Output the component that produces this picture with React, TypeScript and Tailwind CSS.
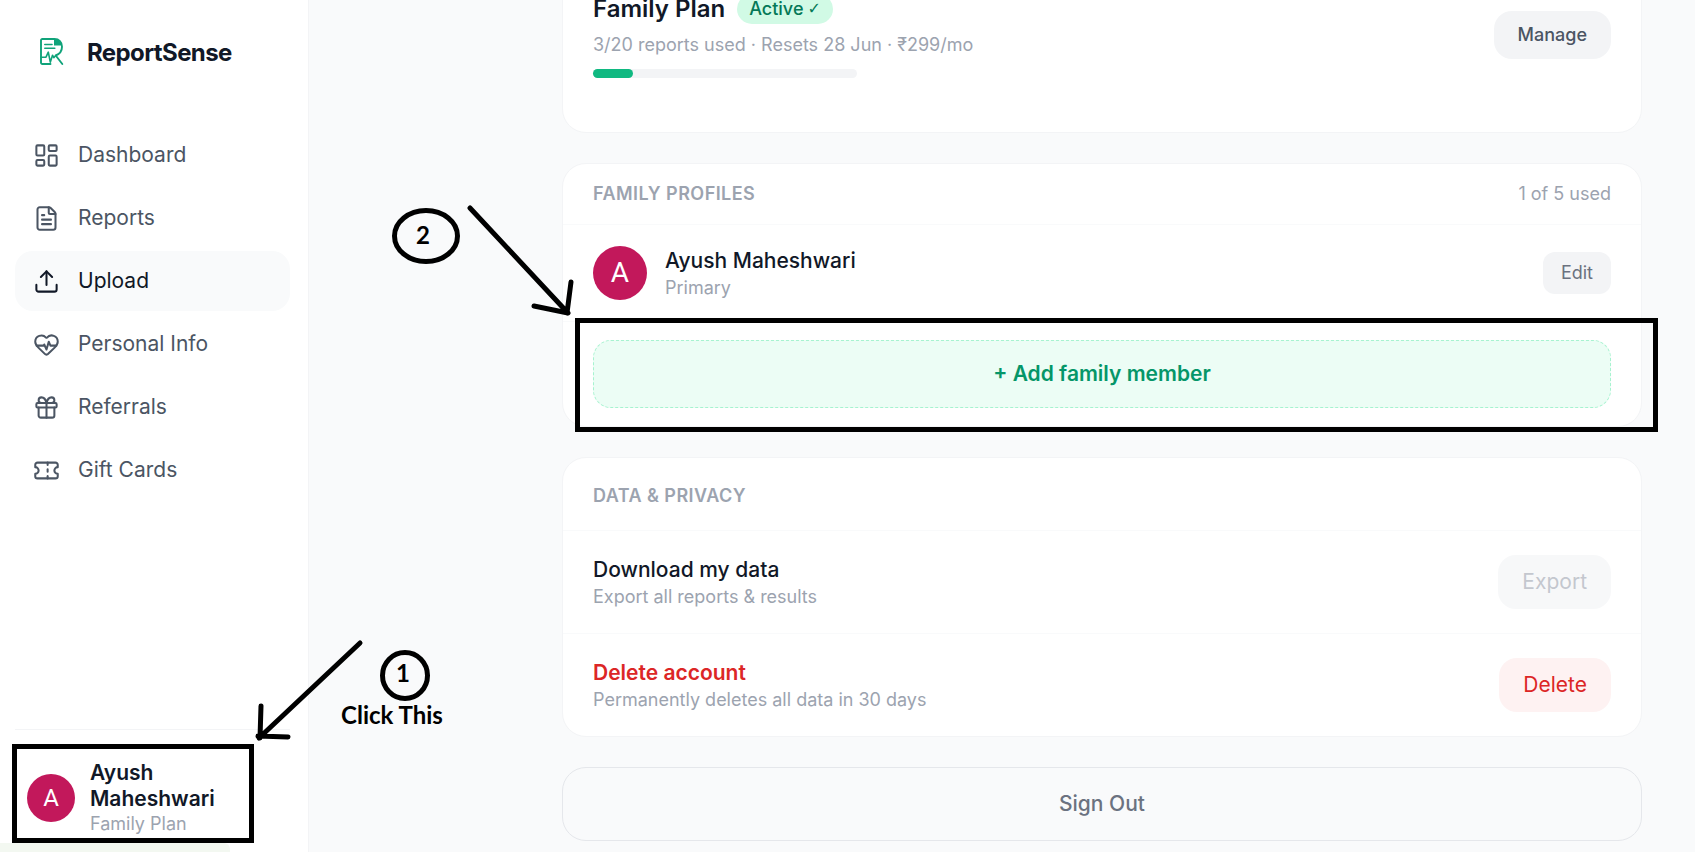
import React from "react";
import {
  LayoutDashboard,
  FileText,
  Upload,
  HeartPulse,
  Gift,
  Ticket,
  type LucideIcon,
} from "lucide-react";

const NAV: { label: string; icon: LucideIcon; active?: boolean }[] = [
  { label: "Dashboard", icon: LayoutDashboard },
  { label: "Reports", icon: FileText },
  { label: "Upload", icon: Upload, active: true },
  { label: "Personal Info", icon: HeartPulse },
  { label: "Referrals", icon: Gift },
  { label: "Gift Cards", icon: Ticket },
];

function Logo() {
  return (
    <svg
      className="h-[30px] w-[26px] shrink-0"
      viewBox="0 0 26 30"
      fill="none"
      stroke="#10a37a"
      strokeWidth="1.9"
      strokeLinecap="round"
      strokeLinejoin="round"
      aria-hidden="true"
    >
      <path d="M11.500 27H3.300a1.300 1.300 0 0 1-1.300-1.300V3.300A1.300 1.300 0 0 1 3.300 2H15.500c4.500 0 7.500 3 7.500 7.700 0 4.500-3 7.500-6.300 8.800L23.300 27" />
      <path d="M15 2v6.500h8C22.700 5 19.500 2 15 2z" fill="#10a37a" stroke="none" />
      <path d="M5.800 7.500h7.200M5.800 11.200h10" strokeWidth="1.600" />
      <path d="M2 20.200h5l2.300-5 2 10 2.200-7 1.300 2.500 2-2.200" strokeWidth="1.600" />
    </svg>
  );
}

function Avatar({ className }: { className: string }) {
  return (
    <span
      className={`flex shrink-0 items-center justify-center rounded-full bg-[#c2185b] font-['Roboto',sans-serif] text-white ${className}`}
    >
      A
    </span>
  );
}

function Sidebar() {
  return (
    <aside className="relative flex w-[309px] shrink-0 flex-col border-r border-[#f3f4f6] bg-white px-[15px] pb-1">
      <div className="mt-9 mb-[57px] flex h-8 items-center gap-[22px] pl-6">
        <Logo />
        <span className="pt-0.5 text-2xl font-bold tracking-tight text-[#111827]">ReportSense</span>
      </div>
      <nav className="mr-[3px] flex flex-col gap-[3px]">
        {NAV.map(({ label, icon: Icon, active }) => (
          <a
            key={label}
            href="#"
            className={`flex h-[60px] items-center gap-[18px] rounded-[18px] px-[18px] text-[21px] leading-[30px] ${
              active ? "bg-[#f9fafb] text-[#111827]" : "text-[#4b5563]"
            }`}
          >
            <Icon size={27} strokeWidth={1.8} aria-hidden="true" />
            {label}
          </a>
        ))}
      </nav>
      <div className="mt-auto mr-[3px] border-t border-[#f3f4f6] pt-[18px]">
        <button
          type="button"
          className="relative flex w-full items-center gap-[15px] p-3 text-left"
        >
          <Avatar className="size-12 text-2xl" />
          <span className="flex w-[150px] flex-col">
            <span className="text-[21px] leading-[26px] font-semibold text-[#111827]">
              Ayush Maheshwari
            </span>
            <span className="text-lg leading-6 text-[#9ca3af]">Family Plan</span>
          </span>
          <span className="absolute -top-1 right-[36px] bottom-[5px] -left-[3px] border-5 border-black" />
        </button>
      </div>
      <span className="absolute bottom-0 left-0 h-[9px] w-[230px] rounded-tr-md bg-[#f3f8f1]" />
    </aside>
  );
}

const card = "rounded-3xl border border-[#f3f4f6] bg-white";
const heading = "text-lg leading-6 font-semibold tracking-wide text-[#9ca3af] uppercase";

function TwoLine({ title, note, tone }: { title: string; note: string; tone: string }) {
  return (
    <div>
      <p className={`text-[21px] leading-[30px] ${tone}`}>{title}</p>
      <p className="text-lg leading-6 text-[#9ca3af]">{note}</p>
    </div>
  );
}

function PlanCard() {
  return (
    <section className={`${card} px-[30px] pt-6 pb-[54px]`}>
      <div className="flex items-center justify-between">
        <div>
          <div className="flex h-[33px] items-center gap-3">
            <h2 className="text-2xl font-semibold text-[#111827]">Family Plan</h2>
            <span className="flex items-center gap-1 rounded-full bg-[#d1fae5] px-3 py-[3px] text-lg leading-6 font-medium text-[#047857]">
              Active
              <span className="font-['DejaVu_Sans',sans-serif] text-base leading-6 font-normal">✓</span>
            </span>
          </div>
          <p className="mt-2 text-lg leading-6 text-[#9ca3af]">
            3/20 reports used · Resets 28 Jun · ₹299/mo
          </p>
          <div className="mt-3 h-[9px] w-[264px] rounded-full bg-[#f3f4f6]">
            <div className="h-full w-[15%] rounded-full bg-[#10b981]" />
          </div>
        </div>
        <button
          type="button"
          className="h-12 rounded-[18px] bg-[#f3f4f6] px-6 text-lg font-medium text-[#4b5563]"
        >
          Manage
        </button>
      </div>
    </section>
  );
}

function FamilyCard() {
  return (
    <section className={card}>
      <header className="flex items-center justify-between border-b border-[#f9fafb] px-[30px] py-[18px]">
        <h2 className={heading}>Family Profiles</h2>
        <span className="text-lg leading-6 text-[#9ca3af]">1 of 5 used</span>
      </header>
      <div className="flex items-center gap-[18px] border-b border-[#f9fafb] px-[30px] py-[21px]">
        <Avatar className="size-[54px] text-[28px]" />
        <TwoLine title="Ayush Maheshwari" note="Primary" tone="font-medium text-[#111827]" />
        <button
          type="button"
          className="ml-auto h-[42px] rounded-xl bg-[#f3f4f6] px-[18px] text-lg text-[#6b7280]"
        >
          Edit
        </button>
      </div>
      <div className="relative px-[30px] py-[18px]">
        <button
          type="button"
          className="h-[68px] w-full rounded-[18px] border border-dashed border-[#a7f3d0] bg-[#ecfdf5] text-[21px] font-semibold text-[#059669]"
        >
          + Add family member
        </button>
        <span className="pointer-events-none absolute -top-1 -right-[17px] -bottom-1.5 left-3 border-5 border-black" />
      </div>
    </section>
  );
}

function PrivacyCard() {
  return (
    <section className={card}>
      <header className="border-b border-[#f9fafb] px-[30px] pt-[26px] pb-[22px]">
        <h2 className={heading}>Data &amp; Privacy</h2>
      </header>
      <div className="flex items-center justify-between border-b border-[#f9fafb] px-[30px] py-6">
        <TwoLine
          title="Download my data"
          note="Export all reports & results"
          tone="font-medium text-[#111827]"
        />
        <button
          type="button"
          disabled
          className="h-[54px] rounded-[18px] bg-[#f3f4f6] px-6 text-[21px] text-[#9ca3af] opacity-60"
        >
          Export
        </button>
      </div>
      <div className="flex items-center justify-between px-[30px] py-6">
        <TwoLine
          title="Delete account"
          note="Permanently deletes all data in 30 days"
          tone="font-semibold text-[#dc2626]"
        />
        <button
          type="button"
          className="h-[54px] rounded-[18px] bg-[#fef2f2] px-6 text-[21px] text-[#dc2626]"
        >
          Delete
        </button>
      </div>
    </section>
  );
}

function Annotations() {
  return (
    <svg
      className="pointer-events-none absolute top-0 left-0 h-full w-[620px]"
      fill="none"
      stroke="#000"
      strokeWidth="5"
      strokeLinecap="round"
      strokeLinejoin="round"
    >
      <ellipse cx="426" cy="236" rx="31.500" ry="25.500" />
      <path d="M470 208l98 105M534 306l34 7M571 282l-4 31" />
      <ellipse cx="405" cy="675.500" rx="22.500" ry="23" />
      <path d="M360 643L259 738M261 706l-1 32M258 736l30 1" />
      <g
        fill="#000"
        stroke="none"
        textAnchor="middle"
        className="font-['Lato',sans-serif] text-2xl font-bold"
      >
        <text x="423" y="244">2</text>
        <text x="403" y="682">1</text>
        <text x="392" y="724">Click This</text>
      </g>
    </svg>
  );
}

export default function App() {
  return (
    <div className="relative flex h-screen overflow-hidden bg-[#f9fafb] font-['Inter',sans-serif]">
      <Sidebar />
      <main className="min-w-0 flex-1 overflow-hidden pr-[53px] pl-[253px]">
        <div className="-mt-[33px] flex flex-col gap-[30px]">
          <PlanCard />
          <FamilyCard />
          <PrivacyCard />
          <button
            type="button"
            className="h-[74px] rounded-3xl border border-[#e5e7eb] text-[21px] font-medium text-[#6b7280]"
          >
            Sign Out
          </button>
        </div>
      </main>
      <Annotations />
    </div>
  );
}
